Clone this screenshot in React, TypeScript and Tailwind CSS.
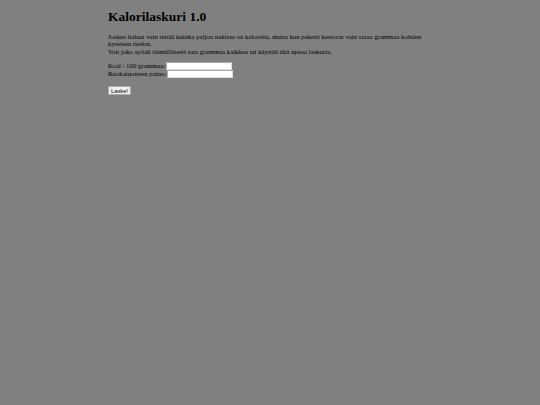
import React from 'react';

export default function App() {
    return (
        <div className="min-h-[405px] w-full bg-[#808080] text-black" style={{ fontFamily: '"Liberation Serif", serif' }}>
            <div className="ml-[108px] w-[320px] pt-[9px]">
                <h1 className="text-[13.5px] font-bold leading-[16px]">Kalorilaskuri 1.0</h1>
                <p className="mt-[8px] text-[6.8px] leading-[7.4px]">
                    Joskus haluat vain tietää kuinka paljon nakissa on kaloreita, mutta kun paketit kertovat vain sataa grammaa kohden kyseisen tiedon.
                    <br />
                    Voit joko syödä täsmällisesti sata grammaa kaikkea tai käyttää tätä upeaa laskuria.
                </p>
                <form className="mt-[7px] text-[6.8px] leading-[8px]" onSubmit={(e) => e.preventDefault()}>
                    <div className="flex h-[8px] items-center">
                        <span>Kcal / 100 grammaa:</span>
                        <input className="ml-[1px] h-[8px] w-[66px] border border-[#aaa] border-b-[#ddd] border-r-[#ddd] bg-white" />
                    </div>
                    <div className="flex h-[8px] items-center">
                        <span>Ruokatuotteen paino:</span>
                        <input className="ml-[1px] h-[8px] w-[66px] border border-[#aaa] border-b-[#ddd] border-r-[#ddd] bg-white" />
                    </div>
                    <button className="mt-[8px] h-[9px] w-[23px] rounded-[1px] border border-[#aaa] bg-[#efefef] text-[5.8px] leading-[6px]" style={{ fontFamily: '"Liberation Sans", sans-serif' }}>
                        Laske!
                    </button>
                </form>
            </div>
        </div>
    );
}
